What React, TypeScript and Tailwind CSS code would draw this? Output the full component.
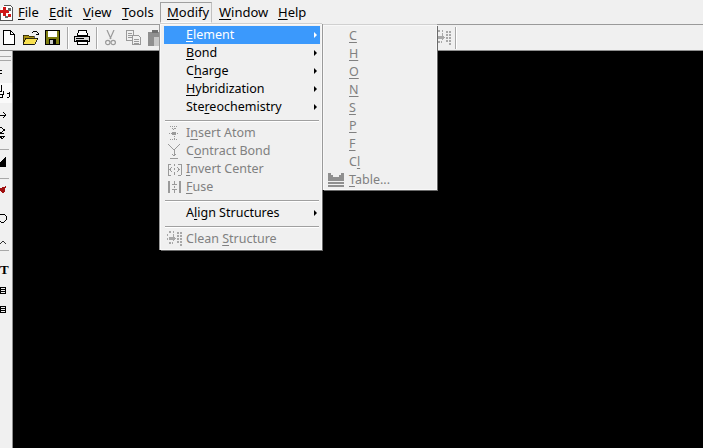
import React from "react";

const F = ({ children }: { children: React.ReactNode }) => <span className="underline decoration-1 underline-offset-[2px]">{children}</span>;

function Item({ pre, u, post, arrow, active, disabled, icon }: { pre?: string; u: string; post?: string; arrow?: boolean; active?: boolean; disabled?: boolean; icon?: React.ReactNode }) {
  const color = active ? "bg-[#3b99fc] text-white" : disabled ? "text-[#808080]" : "text-black";
  return (
    <div className={`relative flex h-[18px] items-center pl-[22px] ${color}`}>
      {icon && <span className="absolute left-[2px] top-0 flex h-[18px] w-[16px] items-center justify-center">{icon}</span>}
      <span className="whitespace-pre">{pre}<F>{u}</F>{post}</span>
      {arrow && <span className={`absolute right-[3px] top-[6px] h-0 w-0 border-y-[3px] border-l-[3px] border-y-transparent ${active ? "border-l-white" : "border-l-black"}`} />}
    </div>
  );
}

const Sep = () => <div className="mx-[1px] mb-[2px] mt-[4px] h-[2px] border-y border-t-[#a0a0a0] border-b-white" />;

const Panel = ({ className, children }: { className: string; children: React.ReactNode }) => (
  <div className={`absolute border border-[#f8f8f8] bg-[#f0f0f0] shadow-[1px_1px_0_#6a6a6a,-1px_0_0_#9a9a9a,0_-1px_0_#d0d0d0] ${className}`}>{children}</div>
);

const Svg = ({ w = 16, h = 16, className = "", children }: { w?: number; h?: number; className?: string; children: React.ReactNode }) => (
  <svg width={w} height={h} viewBox={`0 0 ${w} ${h}`} className={`block shrink-0 ${className}`} shapeRendering="crispEdges">{children}</svg>
);

const D = "#9a9a9a";

const InsertAtom = () => (
  <Svg w={14} h={16}><path d="M3 1h8M7 1v4M5 3l2 2 2-2M2 8h10M7 9v5M3 14h8" stroke={D} fill="none" strokeDasharray="1 1" /><path d="M5 7h4v3H5z" fill={D} /></Svg>
);
const ContractBond = () => (
  <Svg w={14} h={16}><path d="M1 1l6 6 6-6M7 7v5M3 15h8M5 11l2 2 2-2" stroke={D} fill="none" /></Svg>
);
const InvertCenter = () => (
  <Svg w={15} h={15}><path d="M1 2v11M14 2v11M1 2h3M1 13h3M11 2h3M11 13h3M7 2v2M7 6v2M7 10v3M5 5L3 7.500 5 10M10 5l2 2.500L10 10" stroke={D} fill="none" /></Svg>
);
const FuseIcon = () => (
  <Svg w={13} h={14}><path d="M1 1v12M12 1v12" stroke={D} strokeWidth="2" /><path d="M6 1h1v3H6zM4 4h5v1H4zM6 6h1v2H6zM4 9h5v1H4zM6 10h1v3H6z" fill={D} /></Svg>
);
const DotsIcon = ({ color = "#a8a8a8" }: { color?: string }) => (
  <Svg w={16} h={16}>
    <path d="M3 1h2M7 1h1M1 4h1M1 8h1M3 12h2M6 12h1M7 4h1M7 9h1" stroke={color} strokeWidth="2" fill="none" />
    <path d="M3 6h4V4l3 3.500L7 11V9H3z" fill={color} />
    <path d="M11 1h2v2h-2zM14 1h2v2h-2zM11 4h2v2h-2zM14 4h2v2h-2zM11 7h2v2h-2zM14 7h2v2h-2zM11 10h2v2h-2zM14 10h2v2h-2zM14 13h2v2h-2z" fill={color} />
  </Svg>
);
const TableIcon = () => (
  <Svg w={16} h={15}><path d="M0 1h3v2h2v2h6V3h2V1h3v8H0zM0 10h16v2H0zM0 13h16v2H0z" fill="#8f8f8f" /></Svg>
);

const AppIcon = () => (
  <Svg w={13} h={22}>
    <path d="M3.500 4.500h7l2 2v13h-12v-11" fill="#fff" stroke="#555" />
    <path d="M0 9h3v-3h3v3h3v3H6v3H3v-3H0z" fill="#d01818" />
    <path d="M8 13h3v3H8z" fill="#d01818" />
    <path d="M5 15h3v2H5zM8 7h3v3H8z" fill="#666" />
  </Svg>
);
const NewIcon = () => (
  <Svg w={12} h={15}><path d="M.5.500h7l4 4v10H.5z" fill="#fff" stroke="#000" /><path d="M7.500.500v4h4" fill="none" stroke="#000" /></Svg>
);
const OpenIcon = () => (
  <Svg w={16} h={15}>
    <path d="M0 5h5l1 1h5v8H0z" fill="#a88f10" stroke="#000" strokeWidth="0.6" />
    <path d="M0 14l3-6h12l-3 6z" fill="#f8e050" stroke="#000" strokeWidth="0.8" />
    <path d="M9 3l2-2h2l2 2v2M15 5l-2-1M15 5l1-2" stroke="#000" fill="none" />
  </Svg>
);
const SaveIcon = () => (
  <Svg w={15} h={15}>
    <path d="M0 0h15v15H0z" fill="#000" />
    <path d="M1 1h13v13H1z" fill="#7c7c10" />
    <path d="M3 1h9v6H3z" fill="#fff" /><path d="M4 9h7v5H4z" fill="#000" /><path d="M5 10h3v4H5z" fill="#c8c8c8" />
  </Svg>
);
const PrintIcon = () => (
  <Svg w={16} h={15}>
    <path d="M4.500.500h8l1 5h-10z" fill="#fff" stroke="#000" />
    <path d="M.5 6.500h15v5H.5z" fill="#d8d8d8" stroke="#000" />
    <path d="M3 11.500h10v3H3z" fill="#fff" stroke="#000" />
    <path d="M2 8h8M2 10h12" stroke="#000" />
  </Svg>
);
const CutIcon = () => (
  <Svg w={11} h={16}><g shapeRendering="auto" stroke="#9a9a9a" fill="none" strokeWidth="1.2"><path d="M2 0l4 9M9 0L5 9" /><circle cx="2.800" cy="12.500" r="2.200" /><circle cx="8.200" cy="12.500" r="2.200" /></g></Svg>
);
const CopyIcon = () => (
  <Svg w={16} h={15}><path d="M.5.500h7v10h-7z" fill="#f0f0f0" stroke="#9a9a9a" /><path d="M2 3h4M2 5h4M2 7h4" stroke="#9a9a9a" /><path d="M6.500 5.500h6l2 2v7h-8z" fill="#f0f0f0" stroke="#9a9a9a" /><path d="M8 9h5M8 11h5M8 13h5" stroke="#9a9a9a" /></Svg>
);
const PasteIcon = () => (
  <Svg w={14} h={16}><path d="M0 2h14v14H0z" fill="#8f8f8f" /><path d="M4 0h6v3H4z" fill="#6f6f6f" /><path d="M6 7h8v9H6z" fill="#c8c8c8" /></Svg>
);

const VSep = () => <div className="h-[22px] w-[2px] shrink-0 border-x border-l-[#a8a8a8] border-r-white" />;

function LeftIcon({ h, children, className = "" }: { h: number; children?: React.ReactNode; className?: string }) {
  return <div className={`flex w-[12px] shrink-0 items-center ${className}`} style={{ height: h }}>{children}</div>;
}
const HSep = ({ className }: { className: string }) => <div className={`flex shrink-0 flex-col justify-end ${className}`}><div className="h-[2px] w-[9px] border-t border-[#a8a8a8]" /></div>;
const Gap = ({ className }: { className: string }) => <div className={`shrink-0 ${className}`} />;

const ListGlyph = () => <Svg w={7} h={7}><path d="M.5.500h5v6h-5z M0 2.500h5M0 4.500h5" stroke="#000" fill="none" /></Svg>;

function LeftBar() {
  return (
    <div className="flex h-full w-[13px] shrink-0 flex-col overflow-hidden border-r border-[#8f8f8f] bg-[#f0f0f0]">
      <div className="mt-[5px] h-[5px] w-[11px] shrink-0 border-y border-[#a8a8a8]" />
      <LeftIcon h={22}><Svg w={12} h={12}><path d="M0 4h2v1H0zM0 7h2v1H0z" fill="#000" /></Svg></LeftIcon>
      <LeftIcon h={20} className="bg-[#fafafa]"><Svg w={11} h={16}><path d="M1 0v6h-1M0 9h3v-3M2 9v3h-2M7 9l2-1v4l-2 1" stroke="#000" fill="none" /></Svg></LeftIcon>
      <LeftIcon h={24}><Svg w={7} h={8}><path d="M0 4h5M3 1l3 3-3 3" stroke="#000" fill="none" /></Svg></LeftIcon>
      <LeftIcon h={12}><Svg w={7} h={14}><path d="M0 1l5 3-5 3h4M0 10h5l-3 3z" stroke="#000" fill="none" /></Svg></LeftIcon>
      <HSep className="h-[12px]" />
      <LeftIcon h={24}><Svg w={8} h={12}><path d="M0 5l6-5v10H0z" fill="#000" /></Svg></LeftIcon>
      <HSep className="h-[5px]" />
      <LeftIcon h={20}><Svg w={7} h={8}><path d="M0 2l6-2-1 5-2 3-3-3z" fill="#a01010" /></Svg></LeftIcon>
      <Gap className="h-[8px]" />
      <LeftIcon h={20}><Svg w={7} h={10}><path d="M0 2l1-1h3l2 2v4l-2 2H1L0 8" stroke="#000" fill="none" /></Svg></LeftIcon>
      <Gap className="h-[8px]" />
      <LeftIcon h={12}><Svg w={8} h={5}><path d="M0 4l3-3 3 3" stroke="#333" fill="none" /></Svg></LeftIcon>
      <HSep className="h-[4px]" />
      <LeftIcon h={34}><span className="font-['Liberation_Serif',serif] text-[13px] font-bold leading-none text-black">T</span></LeftIcon>
      <LeftIcon h={8}><ListGlyph /></LeftIcon>
      <Gap className="h-[11px]" />
      <LeftIcon h={8}><ListGlyph /></LeftIcon>
    </div>
  );
}

const Sub = ({ children }: { children: React.ReactNode }) => <div className="flex h-[18px] items-center pl-[25px] text-[#808080]">{children}</div>;

export default function App() {
  return (
    <div className="relative flex h-[448px] w-[703px] flex-col overflow-hidden bg-[#f0f0f0] font-['Noto_Sans',sans-serif] text-[12.5px] leading-none text-black">
      {/* menu bar */}
      <div className="flex h-[24px] shrink-0 items-center">
        <div className="w-[18px]"><AppIcon /></div>
        <div className="flex items-center text-[13px]">
          <span className="w-[31px]"><F>F</F>ile</span>
          <span className="w-[34px]"><F>E</F>dit</span>
          <span className="w-[39px]"><F>V</F>iew</span>
          <span className="w-[38px]"><F>T</F>ools</span>
          <span className="mr-[7px] flex h-[21px] w-[52px] items-center border border-[#fafafa] border-l-[#a0a0a0] border-t-[#a0a0a0] border-r-[#c0c0c0] pl-[6px]"><F>M</F>odify</span>
          <span className="w-[59px]"><F>W</F>indow</span>
          <span><F>H</F>elp</span>
        </div>
      </div>
      {/* top toolbar */}
      <div className="flex h-[27px] shrink-0 items-center border-y border-t-[#9a9a9a] border-b-[#8f8f8f] pl-[3px]">
        <NewIcon />
        <span className="w-[8px]" /><OpenIcon />
        <span className="w-[6px]" /><SaveIcon />
        <span className="w-[7px]" /><VSep />
        <span className="w-[5px]" /><PrintIcon />
        <span className="w-[6px]" /><VSep />
        <span className="w-[7px]" /><CutIcon />
        <span className="w-[10px]" /><CopyIcon />
        <span className="w-[6px]" /><PasteIcon />
        <span className="w-[273px]" /><DotsIcon />
        <span className="w-[4px]" /><VSep />
      </div>
      {/* body */}
      <div className="flex min-h-0 flex-1">
        <LeftBar />
        <div className="flex-1 bg-black" />
      </div>

      {/* Modify menu */}
      <Panel className="left-[160px] top-[24px] w-[162px] pb-[1px] pl-[3px] pr-[1px] pt-[1px]">
        <Item u="E" post="lement" arrow active />
        <Item u="B" post="ond" arrow />
        <Item pre="C" u="h" post="arge" arrow />
        <Item u="H" post="ybridization" arrow />
        <Item pre="Ste" u="r" post="eochemistry" arrow />
        <Sep />
        <Item pre="I" u="n" post="sert Atom" disabled icon={<InsertAtom />} />
        <Item pre="C" u="o" post="ntract Bond" disabled icon={<ContractBond />} />
        <Item u="I" post="nvert Center" disabled icon={<InvertCenter />} />
        <Item u="F" post="use" disabled icon={<FuseIcon />} />
        <Sep />
        <Item pre="A" u="l" post="ign Structures" arrow />
        <Sep />
        <Item pre="Clean " u="S" post="tructure" disabled icon={<DotsIcon />} />
      </Panel>

      {/* Element submenu */}
      <Panel className="left-[323px] top-[25px] h-[165px] w-[114px] pt-[1px]">
        <Sub><F>C</F></Sub>
        <Sub><F>H</F></Sub>
        <Sub><F>O</F></Sub>
        <Sub><F>N</F></Sub>
        <Sub><F>S</F></Sub>
        <Sub><F>P</F></Sub>
        <Sub><F>F</F></Sub>
        <Sub>C<F>l</F></Sub>
        <div className="relative flex h-[18px] items-center pl-[25px] text-[#808080]">
          <span className="absolute left-[4px] top-[1px]"><TableIcon /></span>
          <span><F>T</F>able...</span>
        </div>
      </Panel>
    </div>
  );
}
